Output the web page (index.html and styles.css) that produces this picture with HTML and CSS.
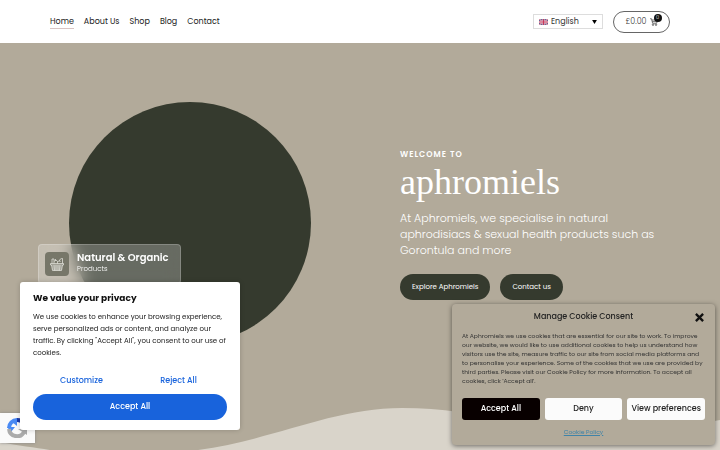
FILE: index.html
```html
<!DOCTYPE html>
<html lang="en">
<head>
    <meta charset="UTF-8">
    <meta name="viewport" content="width=device-width, initial-scale=1.0">
    <title>Aphromiels</title>
    <link rel="stylesheet" href="styles.css">
</head>
<body>
    <header class="header">
        <nav class="nav">
            <a class="active" href="#">Home</a>
            <a href="#about">About Us</a>
            <a href="#shop">Shop</a>
            <a href="#blog">Blog</a>
            <a href="#contact">Contact</a>
        </nav>
        <div class="header-tools">
            <div class="language">
                <svg class="flag" viewBox="0 0 18 12" aria-hidden="true">
                    <rect width="18" height="12" fill="#56578c"/>
                    <path d="M0 0l18 12M18 0L0 12" stroke="#e6c9d6" stroke-width="2.6"/>
                    <path d="M0 0l18 12M18 0L0 12" stroke="#c54866" stroke-width="1"/>
                    <path d="M9 0v12M0 6h18" stroke="#f0dce4" stroke-width="4"/>
                    <path d="M9 0v12M0 6h18" stroke="#c8385b" stroke-width="2.4"/>
                </svg>
                <select aria-label="Language">
                    <option>English</option>
                </select>
                <svg class="arrow" viewBox="0 0 6 5" aria-hidden="true"><path d="M0 0h6L3 5z"/></svg>
            </div>
            <a class="cart" href="#cart">
                <span>£0.00</span>
                <span class="cart-icon">
                    <svg viewBox="0 0 16 16" fill="none" stroke="#333" stroke-width="1.3" aria-hidden="true">
                        <path d="M0 1.500h3l2.200 9h8L15.500 4H3.700M4.500 7.200h10"/>
                        <circle cx="6" cy="13.500" r="1.500"/>
                        <circle cx="12" cy="13.500" r="1.500"/>
                    </svg>
                    <span class="cart-count">0</span>
                </span>
            </a>
        </div>
    </header>

    <main class="hero">
        <svg class="wave" viewBox="0 0 720 50" preserveAspectRatio="none" aria-hidden="true">
            <path d="M0 42C20 46 40 48 55 51H190C270 42 330 8 402 8C480 8 540 32 600 32C650 32 690 26 720 20V51H0z" fill="#d9d4ca"/>
        </svg>
        <div class="hero-media">
            <div class="circle"></div>
            <div class="badge">
                <span class="badge-icon">
                    <svg viewBox="0 0 28 26" fill="none" stroke="#e5e5df" stroke-width="1.5" aria-hidden="true">
                        <path d="M1 11h26v3H1zM3 14l2 11h18l2-11M8 14l1 11M12 14v11M16 14v11M20 14l-1 11M4 18h20M4 22h20"/>
                        <path d="M4 11V2h4v9M8 7c2-3 6-3 7 0v4M15 8c2-3 5-3 6 0M19 6c0-3 2-5 6-5v10M11 5V2"/>
                    </svg>
                </span>
                <div>
                    <strong>Natural &amp; Organic</strong>
                    <p>Products</p>
                </div>
            </div>
        </div>
        <div class="hero-text">
            <p class="welcome">WELCOME TO</p>
            <h1>aphromiels</h1>
            <p class="intro">At Aphromiels, we specialise in natural aphrodisiacs &amp; sexual health products such as Gorontula and more</p>
            <div class="hero-links">
                <a href="#shop">Explore Aphromiels</a>
                <a href="#contact">Contact us</a>
            </div>
        </div>
    </main>

    <div class="recaptcha">
        <svg viewBox="0 0 20 20" fill="none" aria-hidden="true">
            <path d="M2 10a8 8 0 0 1 8-8" stroke="#4a8af4" stroke-width="4"/>
            <path d="M10 0v8L5 4zM0 9h8L4 14z" fill="#4a8af4"/>
            <path d="M10 2a8 8 0 0 1 7 4" stroke="#1c3aa9" stroke-width="4"/>
            <path d="M2 11a8 8 0 0 0 15 3" stroke="#ababab" stroke-width="4"/>
            <path d="M11 11h9v6z" fill="#ababab"/>
        </svg>
    </div>

    <section class="privacy" aria-label="We value your privacy">
        <h2>We value your privacy</h2>
        <p>We use cookies to enhance your browsing experience, serve personalized ads or content, and analyze our traffic. By clicking "Accept All", you consent to our use of cookies.</p>
        <div class="privacy-buttons">
            <button type="button">Customize</button>
            <button type="button">Reject All</button>
            <button type="button" class="accept">Accept All</button>
        </div>
    </section>

    <section class="consent" aria-label="Manage Cookie Consent">
        <div class="consent-header">
            <h2>Manage Cookie Consent</h2>
            <button type="button" class="close" aria-label="Close">
                <svg viewBox="0 0 10 10" stroke="#111" stroke-width="2.600" aria-hidden="true"><path d="M1 1l8 8M9 1L1 9"/></svg>
            </button>
        </div>
        <p>At Aphromiels we use cookies that are essential for our site to work. To improve our website, we would like to use additional cookies to help us understand how visitors use the site, measure traffic to our site from social media platforms and to personalise your experience. Some of the cookies that we use are provided by third parties. Please visit our Cookie Policy for more information. To accept all cookies, click 'Accept all'.</p>
        <div class="consent-buttons">
            <button type="button" class="dark">Accept All</button>
            <button type="button">Deny</button>
            <button type="button">View preferences</button>
        </div>
        <a class="policy" href="#policy">Cookie Policy</a>
    </section>
</body>
</html>
```

FILE: styles.css
```css
* {
    box-sizing: border-box;
}

body {
    margin: 0;
    font-family: Poppins, Inter, sans-serif;
    font-size: 8px;
    color: #333;
    background-color: #fff;
    overflow: hidden;
}

h1, h2, p {
    margin: 0;
}

a {
    color: inherit;
    text-decoration: none;
}

button, select {
    font-family: inherit;
    border: 0;
    padding: 0;
    cursor: pointer;
}

svg {
    display: block;
}

/* header */
.header {
    display: flex;
    justify-content: space-between;
    align-items: center;
    height: 43px;
    padding: 0 50px;
}

.nav {
    display: flex;
    gap: 10px;
    padding-top: 2px;
    line-height: 12px;
    color: #222;
}

.nav a {
    border-bottom: 1px solid transparent;
}

.nav .active {
    border-bottom-color: #d8c4c4;
}

.header-tools {
    display: flex;
    align-items: center;
    gap: 10px;
}

.language {
    display: flex;
    align-items: center;
    gap: 3px;
    width: 70px;
    height: 15px;
    padding: 0 5px;
    border: 1px solid #ddd;
}

.flag {
    width: 9px;
    height: 6px;
}

.language select {
    flex: 1;
    min-width: 0;
    appearance: none;
    background: none;
    font-size: 8px;
    color: #333;
}

.arrow {
    width: 5px;
    height: 4px;
}

.cart {
    display: flex;
    align-items: center;
    justify-content: center;
    gap: 3px;
    width: 57px;
    height: 22px;
    border: 1px solid #666;
    border-radius: 11px;
    font-weight: 300;
}

.cart-icon {
    position: relative;
    width: 8px;
}

.cart-count {
    position: absolute;
    top: -4px;
    right: -4px;
    width: 8px;
    height: 8px;
    border-radius: 50%;
    background-color: #111;
    color: #fff;
    font-size: 5px;
    line-height: 8px;
    text-align: center;
}

/* hero */
.hero {
    position: relative;
    display: grid;
    grid-template-columns: 1fr 1fr;
    gap: 60px;
    min-height: calc(100vh - 43px);
    padding: 59px 20px 106px 40px;
    background-color: #b2aa9a;
    align-items: center;
}

.wave {
    position: absolute;
    left: 0;
    bottom: 0;
    width: 100%;
    height: 50px;
}

.hero-media {
    position: relative;
}

.circle {
    width: 242px;
    height: 242px;
    margin: 0 auto;
    border-radius: 50%;
    background-color: #353a2e;
}

.badge {
    position: absolute;
    left: -2px;
    top: 142px;
    display: flex;
    align-items: center;
    gap: 8px;
    width: 143px;
    height: 40px;
    padding: 0 6px;
    border: 1px solid rgba(255, 255, 255, 0.2);
    border-radius: 4px;
    background-color: rgba(255, 255, 255, 0.25);
    backdrop-filter: blur(8px);
    color: #fff;
    line-height: 11px;
}

.badge-icon {
    display: flex;
    align-items: center;
    justify-content: center;
    width: 24px;
    height: 24px;
    border-radius: 4px;
    background-color: #777769;
}

.badge-icon svg {
    width: 14px;
    height: 13px;
}

.badge div {
    padding-bottom: 2px;
}

.badge strong {
    display: block;
    font-size: 10px;
    font-weight: 600;
}

.badge p {
    font-size: 7px;
    font-weight: 300;
}

.hero-text {
    padding-top: 2px;
    color: #fff;
}

.welcome {
    font-size: 8px;
    font-weight: 600;
    letter-spacing: 1px;
    line-height: 12px;
}

.hero h1 {
    font-family: "Liberation Serif", serif;
    font-size: 36px;
    font-weight: 400;
    line-height: 42px;
    margin: 0 0 7px;
}

.intro {
    max-width: 270px;
    font-size: 11px;
    font-weight: 300;
    line-height: 16px;
}

.hero-links {
    display: flex;
    gap: 10px;
    margin-top: 16px;
}

.hero-links a {
    padding: 0 12px;
    border-radius: 13px;
    background-color: #353a2e;
    font-size: 7px;
    line-height: 26px;
}

/* recaptcha badge */
.recaptcha {
    position: fixed;
    left: 0;
    bottom: 7px;
    width: 35px;
    height: 30px;
    padding: 5px 7px;
    background-color: #fafafa;
    box-shadow: 0 0 3px #888;
}

.recaptcha svg {
    width: 20px;
    height: 20px;
}

/* privacy popup */
.privacy {
    position: fixed;
    left: 20px;
    bottom: 20px;
    width: 220px;
    padding: 10px 13px;
    border-radius: 3px;
    background-color: #fff;
    box-shadow: 0 0 5px rgba(0, 0, 0, 0.2);
}

.privacy h2 {
    font-size: 9px;
    font-weight: 700;
    line-height: 13px;
    color: #111;
}

.privacy p {
    margin: 6px 0 11px;
    font-size: 7px;
    line-height: 12px;
    color: #222;
}

.privacy-buttons {
    display: grid;
    grid-template-columns: 1fr 1fr;
}

.privacy-buttons button {
    height: 22px;
    padding: 0;
    margin-bottom: 2px;
    background: none;
    color: #1863dc;
    font-size: 8px;
    font-weight: 500;
}

.privacy-buttons .accept {
    grid-column: 1 / 3;
    height: 26px;
    margin: 0;
    border-radius: 13px;
    background-color: #1863dc;
    color: #fff;
}

/* cookie consent */
.consent {
    position: fixed;
    right: 5px;
    bottom: 5px;
    width: 263px;
    padding: 7px 10px 8px;
    border-radius: 4px;
    background-color: #b2aa9a;
    box-shadow: 0 1px 5px rgba(0, 0, 0, 0.5);
    text-align: center;
}

.consent-header {
    display: grid;
    grid-template-columns: 10px 1fr 10px;
    align-items: center;
}

.consent h2 {
    grid-column: 2;
    font-size: 8px;
    font-weight: 500;
    line-height: 12px;
    color: #222;
}

.close {
    width: 9px;
    height: 9px;
    background: none;
}

.consent p {
    margin: 9px 0 12px;
    font-size: 6px;
    line-height: 9px;
    text-align: left;
}

.consent-buttons {
    display: grid;
    grid-template-columns: repeat(3, minmax(0, 1fr));
    gap: 5px;
}

.consent-buttons button {
    height: 22px;
    border-radius: 3px;
    background-color: #fbfbfb;
    color: #222;
    font-size: 8px;
    font-weight: 500;
    white-space: nowrap;
}

.consent-buttons .dark {
    background-color: #080000;
    color: #fff;
}

.policy {
    display: block;
    margin-top: 7px;
    font-size: 6px;
    line-height: 10px;
    color: #3f83a8;
    text-decoration: underline;
}
```
